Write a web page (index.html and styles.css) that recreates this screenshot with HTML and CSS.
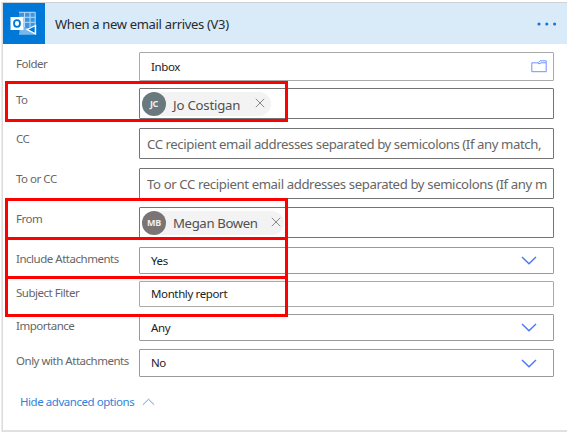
FILE: index.html
```html
<!DOCTYPE html>
<html lang="en">
<head>
<meta charset="utf-8">
<title>When a new email arrives (V3)</title>
<link rel="stylesheet" href="styles.css">
</head>
<body>
<main class="card">
  <header class="header">
    <div class="logo">
      <svg width="42" height="41" viewBox="0 0 42 41" fill="none">
        <path d="M16 9H32.5V31H16Z" fill="#3b95e1"/>
        <path d="M16 9.3H32.2V23L25 27M16 31H32.5M21.5 9V24M27 9V24M17 14.3H32.5M17 19.3H32.5" stroke="#b9dbf6" stroke-width="1"/>
        <path d="M17 24L22 24L32.5 31H17Z" fill="#78b8ed"/>
        <path d="M22.5 26.5L33.2 21.5V32Z" fill="#fff"/>
        <path d="M25.5 26.5L31.7 23.6V29.8Z" fill="#0078d7"/>
        <rect x="7.5" y="14" width="13" height="13" fill="#fff"/>
        <ellipse cx="14" cy="20.5" rx="3" ry="3.3" stroke="#0078d7" stroke-width="1.8"/>
      </svg>
    </div>
    <h1 class="title"><span class="t-title">When a new email arrives (V3)</span></h1>
    <svg class="more" width="20" height="4" viewBox="0 0 20 4" fill="#1674d4"><circle cx="2" cy="2" r="1.55"/><circle cx="9.8" cy="2" r="1.55"/><circle cx="17.6" cy="2" r="1.55"/></svg>
  </header>

  <section class="form">
    <div class="row folder">
      <label class="label">Folder</label>
      <div class="field light"><span class="value">Inbox</span>
        <svg class="folder-icon" width="16" height="13" viewBox="0 0 16 13" fill="none" stroke="#6f93ff"><path d="M.8 2.8H7L9 .8H15.2V11.7H.8ZM7 3.6H9L10 2.8H15"/></svg>
      </div>
    </div>
    <div class="row to">
      <label class="label">To</label>
      <div class="field"><div class="chip chip-jo"><span class="avatar teal">JC</span><span class="name">Jo Costigan</span><svg class="close" width="10" height="10" viewBox="0 0 10 10"><path d="M.8.8L9.2 9.2M9.2.8L.8 9.2"/></svg></div></div>
      <i class="highlight"></i>
    </div>
    <div class="row cc">
      <label class="label">CC</label>
      <div class="field"><span class="placeholder">CC recipient email addresses separated by semicolons (If any match,</span></div>
    </div>
    <div class="row tocc">
      <label class="label">To or CC</label>
      <div class="field"><span class="placeholder">To or CC recipient email addresses separated by semicolons (If any m</span></div>
    </div>
    <div class="row from">
      <label class="label">From</label>
      <div class="field"><div class="chip chip-megan"><span class="avatar brown">MB</span><span class="name">Megan Bowen</span><svg class="close" width="10" height="10" viewBox="0 0 10 10"><path d="M.8.8L9.2 9.2M9.2.8L.8 9.2"/></svg></div></div>
      <i class="highlight"></i>
    </div>
    <div class="row include">
      <label class="label">Include Attachments</label>
      <div class="field mid"><span class="value">Yes</span><svg class="chevron" width="16" height="9" viewBox="0 0 16 9"><path d="M1 1L8 7.8L15 1"/></svg></div>
      <i class="highlight"></i>
    </div>
    <div class="row subject">
      <label class="label">Subject Filter</label>
      <div class="field light"><span class="value">Monthly report</span></div>
      <i class="highlight"></i>
    </div>
    <div class="row importance">
      <label class="label">Importance</label>
      <div class="field mid"><span class="value">Any</span><svg class="chevron" width="16" height="9" viewBox="0 0 16 9"><path d="M1 1L8 7.8L15 1"/></svg></div>
    </div>
    <div class="row only">
      <label class="label">Only with Attachments</label>
      <div class="field mid"><span class="value">No</span><svg class="chevron" width="16" height="9" viewBox="0 0 16 9"><path d="M1 1L8 7.8L15 1"/></svg></div>
    </div>
    <div class="advanced"><span class="t-adv">Hide advanced options</span><svg width="13" height="8" viewBox="0 0 13 8"><path d="M.8 6.8L6.5 1.2L12.2 6.8"/></svg></div>
  </section>
</main>
</body>
</html>
```
FILE: styles.css
```css
* { box-sizing: border-box; }
body {
  margin: 0;
  background: #fff;
  font-family: "Noto Sans", "Open Sans", sans-serif;
  overflow: hidden;
}
.card {
  width: 565px;
  height: 430px;
  margin: 2px 0 0 2px;
  border: 1px solid #d2d2d2;
  border-left-color: #dcdcdc;
  border-right: 0;
  border-bottom: 2px solid #e0e0e0;
  box-shadow: -1px 0 #ececec;
}
.header {
  display: flex;
  align-items: center;
  height: 41px;
  padding-right: 10px;
  background: #d9eaf8;
}
.logo { width: 42px; height: 41px; background: #0078d7; }
.logo svg { display: block; }
.title {
  flex: 1;
  margin: 0 0 0 10px;
  font-size: 13px;
  font-weight: 400;
  line-height: 18px;
  color: #262b30;
  white-space: nowrap;
}
.t-title { letter-spacing: -.32px; }
.form { padding: 8px 13px 0 13px; }
.row {
  position: relative;
  display: grid;
  grid-template-columns: 123px 415px;
}
.label {
  font-size: 11.5px;
  line-height: 16px;
  letter-spacing: -.48px;
  color: #666;
  white-space: nowrap;
}
.field {
  display: flex;
  align-items: center;
  min-width: 0;
  border: 1px solid #747474;
  background: #fff;
  border-radius: 1px;
  overflow: hidden;
}
.light { border-color: #aaa; }
.mid { border-color: #999; }
.value {
  flex: 1;
  padding-left: 11px;
  font-size: 11.5px;
  line-height: 16px;
  letter-spacing: -.38px;
  color: #222;
}
.placeholder {
  padding-left: 7px;
  font-size: 13.2px;
  letter-spacing: -.42px;
  line-height: 18px;
  color: #666;
  white-space: nowrap;
}
.tocc .placeholder { letter-spacing: -.395px; }
.folder { height: 29px; }
.folder .label { padding-top: 4px; }
.to { height: 31px; margin-top: 7px; }
.to .label { padding-top: 4px; }
.cc { height: 31px; margin-top: 9px; }
.cc .label { padding-top: 3px; }
.tocc { height: 31px; margin-top: 9px; }
.tocc .label { padding-top: 3px; }
.from { height: 31px; margin-top: 8px; }
.from .label { padding-top: 4px; }
.include { height: 27px; margin-top: 9px; }
.include .label { padding-top: 4px; }
.subject { height: 26px; margin-top: 7px; }
.subject .label { padding-top: 4px; }
.importance { height: 27px; margin-top: 7px; }
.importance .label { padding-top: 4px; }
.only { height: 28px; margin-top: 8px; }
.only .label { padding-top: 4px; }
.folder-icon { margin-right: 6px; }
.chevron { margin-right: 16px; fill: none; stroke: #4a76f5; stroke-width: 1.4; }
.chip {
  display: flex;
  align-items: center;
  height: 24px;
  margin-left: 2px;
  border-radius: 12px;
  background: #f3f3f3;
}
.chip-jo { width: 129px; }
.chip-megan { width: 142px; }
.avatar {
  display: flex;
  align-items: center;
  justify-content: center;
  width: 24px;
  height: 24px;
  border-radius: 50%;
  color: #eee;
  font-size: 9px;
  font-weight: 700;
  letter-spacing: -.3px;
}
.teal { background: #69797e; }
.brown { background: #7a7574; }
.name {
  flex: 1;
  padding: 2px 0 0 7px;
  font-size: 13.2px;
  line-height: 18px;
  letter-spacing: -.2px;
  color: #505050;
  white-space: nowrap;
}
.close { margin-right: 6px; fill: none; stroke: #888; }
.chip-jo .close { margin-top: -2px; }
.chip-megan .name { padding-top: 1px; letter-spacing: -.38px; }
.chip-megan .close { margin-right: 3px; margin-top: -1px; }
.highlight {
  position: absolute;
  left: -11px;
  width: 283px;
  border: 3px solid #f00;
}
.to .highlight { top: -7px; height: 41px; }
.from .highlight { top: -9px; height: 42px; }
.include .highlight { top: -10px; height: 42px; }
.subject .highlight { top: -5px; height: 41px; }
.from, .include, .subject, .to { z-index: 1; }
.advanced {
  display: flex;
  align-items: center;
  gap: 8px;
  margin: 17px 0 0 4px;
  font-size: 11.5px;
  line-height: 16px;
  color: #3181da;
}
.t-adv { letter-spacing: -.45px; white-space: nowrap; }
.advanced svg { fill: none; stroke: #6d97e8; }
```
